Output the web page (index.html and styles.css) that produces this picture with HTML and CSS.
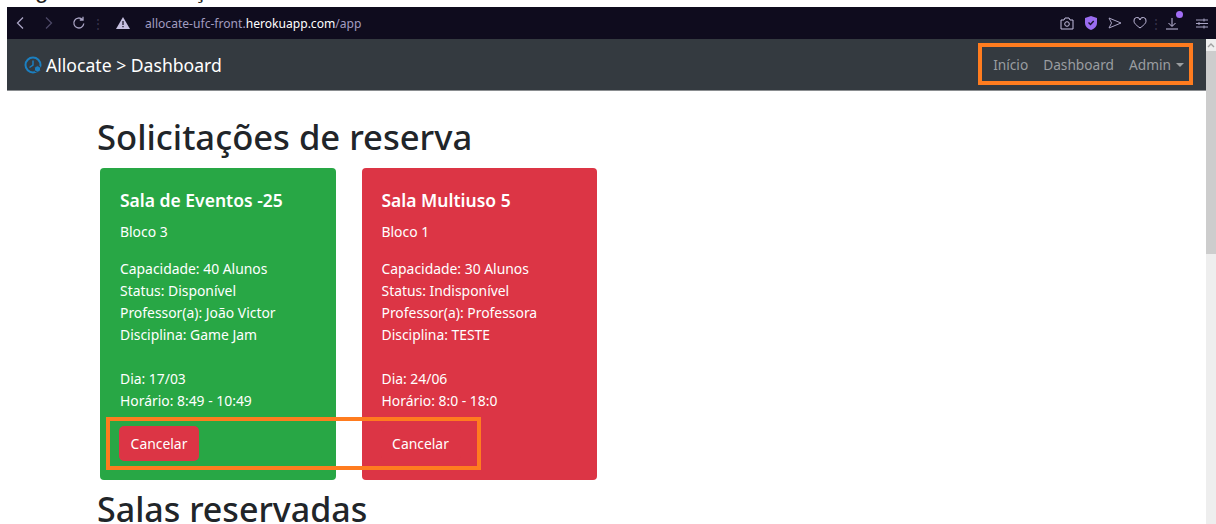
FILE: index.html
```html
<!DOCTYPE html>
<html lang="pt-BR">
<head>
<meta charset="utf-8">
<title>Allocate</title>
<link rel="stylesheet" href="styles.css">
</head>
<body>
<div class="caption"><span>Figura 4: Solicitações de reserva</span></div>
<div class="window">
  <div class="browser-bar">
    <div class="browser-left">
      <svg class="bi" width="10" height="14" viewBox="0 0 10 14"><path d="M8 1.500 2.500 7 8 12.500" fill="none" stroke="#a9a4c4" stroke-width="1.300"/></svg>
      <svg class="bi dim" width="10" height="14" viewBox="0 0 10 14"><path d="M2 1.500 7.500 7 2 12.500" fill="none" stroke="#4c4866" stroke-width="1.300"/></svg>
      <svg class="bi reload" width="14" height="14" viewBox="0 0 14 14"><path d="M11.800 7.500a5 5 0 1 1-1.400-4M11 .8v3.200H7.800" fill="none" stroke="#a9a4c4" stroke-width="1.300"/></svg>
      <span class="bsep">⋮</span>
      <svg class="warn" width="14" height="12" viewBox="0 0 14 12"><path d="M7 0 14 12H0Z" fill="#c5bfe0"/><path d="M6.400 4h1.200v4H6.400zM6.400 9h1.200v1.300H6.400z" fill="#0f0c1e"/></svg>
      <span class="url">allocate-ufc-front.<b>herokuapp.com</b>/app</span>
    </div>
    <div class="browser-right">
      <svg width="14" height="13" viewBox="0 0 14 13"><path d="M1 3h3l1-2h4l1 2h3v9H1Z" fill="none" stroke="#c5bfe0" stroke-width="1"/><circle cx="7" cy="7" r="2.300" fill="none" stroke="#c5bfe0"/></svg>
      <svg width="12" height="14" viewBox="0 0 12 14"><path d="M6 0 12 2v5c0 3.500-3 6-6 7-3-1-6-3.500-6-7V2Z" fill="#9a6cf0"/><path d="M3.500 6.500 5.500 8.500 8.700 5" fill="none" stroke="#17132a" stroke-width="1.400"/></svg>
      <svg width="14" height="12" viewBox="0 0 14 12"><path d="M1 1 13 6 1 11 3.500 6Z" fill="none" stroke="#a9a4c4"/></svg>
      <svg width="14" height="12" viewBox="0 0 14 12"><path d="M7 11C3 8 1 6.300 1 4a3 3 0 0 1 6-1 3 3 0 0 1 6 1c0 2.300-2 4-6 7Z" fill="none" stroke="#c5bfe0"/></svg>
      <span class="bsep">⋮</span>
      <span class="download">
        <svg width="14" height="13" viewBox="0 0 14 13"><path d="M7 1v8M3.500 6 7 9.500 10.500 6M1 12h12" fill="none" stroke="#c5bfe0"/></svg>
        <i class="dot"></i>
      </span>
      <svg class="tune" width="12" height="11" viewBox="0 0 12 11"><path d="M0 2h12M0 5.500h12M0 9h12M8 .5v3M3 4v3M8 7.500v3" fill="none" stroke="#a9a4c4"/></svg>
    </div>
  </div>
  <div class="viewport">
    <div class="page">
      <nav class="navbar">
        <div class="brand">
          <svg class="logo" width="18" height="18" viewBox="0 0 18 18"><circle cx="9" cy="9" r="7.500" fill="none" stroke="#1b7fc0" stroke-width="2"/><path d="M9 4.500V9L5.500 11.500" fill="none" stroke="#1b7fc0" stroke-width="1.500"/><circle cx="13.500" cy="13" r="3.200" fill="#1b7fc0" stroke="#343a40"/></svg>
          <span>Allocate &gt; Dashboard</span>
        </div>
        <ul class="nav">
          <li>Início</li>
          <li>Dashboard</li>
          <li class="dropdown">Admin</li>
        </ul>
      </nav>
      <main class="content">
        <h1>Solicitações de reserva</h1>
        <div class="cards">
          <section class="card green">
            <h5>Sala de Eventos -25</h5>
            <p class="block">Bloco 3</p>
            <p class="details">Capacidade: 40 Alunos<br>Status: Disponível<br>Professor(a): João Victor<br>Disciplina: Game Jam</p>
            <p class="details">Dia: 17/03<br>Horário: 8:49 - 10:49</p>
            <button class="btn">Cancelar</button>
          </section>
          <section class="card red">
            <h5>Sala Multiuso 5</h5>
            <p class="block">Bloco 1</p>
            <p class="details">Capacidade: 30 Alunos<br>Status: Indisponível<br>Professor(a): Professora<br>Disciplina: TESTE</p>
            <p class="details">Dia: 24/06<br>Horário: 8:0 - 18:0</p>
            <button class="btn">Cancelar</button>
          </section>
        </div>
        <h1 class="second">Salas reservadas</h1>
      </main>
    </div>
    <div class="scrollbar">
      <svg class="arrow" width="10" height="12" viewBox="0 0 10 12"><path d="M2 8 5 5 8 8" fill="none" stroke="#a0a0a0" stroke-width="1.400"/></svg>
      <div class="thumb"></div>
    </div>
  </div>
  <!-- highlight frames drawn over the page -->
  <div class="mark mark-nav"></div>
  <div class="mark mark-btn"></div>
</div>
</body>
</html>
```
FILE: styles.css
```css
* { box-sizing: border-box; }
html, body { margin: 0; height: 100%; overflow: hidden; background: #fff; }
body { font-family: "Noto Sans", "Open Sans", sans-serif; color: #212529; }

.caption { height: 7px; overflow: hidden; position: relative; }
.caption span {
  position: absolute; left: 15px; top: -23px;
  font: 24px/26px "Liberation Sans", sans-serif; color: #222;
  white-space: nowrap;
}

.window { position: relative; margin-left: 7px; height: 517px; display: flex; flex-direction: column; overflow: hidden; }

.browser-bar {
  height: 32px; flex: none; background: #0f0c1e;
  display: flex; align-items: center; justify-content: space-between;
  padding: 0 8px;
}
.browser-left, .browser-right { display: flex; align-items: center; }
.browser-left .dim { margin-left: 19px; }
.browser-left .reload { margin-left: 18px; }
.bsep { color: #3a3650; font-size: 12px; margin: 0 6px; }
.warn { margin-left: 6px; }
.url { margin-left: 15px; font-size: 12.100px; color: #a29cc0; }
.url b { font-weight: 400; color: #fff; }
.browser-right { gap: 11px; }
.browser-right .bsep { margin: 0 -8px; }
.download { position: relative; display: flex; margin-right: 6px; }
.dot { position: absolute; right: -4px; top: -6px; width: 7px; height: 7px; border-radius: 50%; background: #a26ef5; }

.viewport { flex: 1; display: flex; min-height: 0; }
.page { flex: 1; min-width: 0; }
.scrollbar { width: 10px; flex: none; background: #eee; }
.arrow { display: block; }
.thumb { height: 203px; background: #cdcdcd; }

.navbar {
  height: 52px; background: #343a40; border-bottom: 1px solid #8a8d90;
  display: flex; align-items: center; justify-content: space-between;
  padding: 0 22px 0 17px;
}
.brand { display: flex; align-items: center; gap: 4px; color: #fff; font-size: 17.600px; }
.nav { list-style: none; display: flex; gap: 15px; margin: 0; padding: 0; color: #9a9da0; font-size: 13.700px; }
.dropdown { display: flex; align-items: center; gap: 5px; }
.dropdown::after {
  content: ""; border-top: 4px solid #9a9da0;
  border-left: 4.500px solid transparent; border-right: 4.500px solid transparent;
}

.content { padding: 0 0 0 90px; }
h1 { font-weight: 500; font-size: 34.600px; line-height: 40px; margin: 26px 0 11px; }
.cards { display: flex; gap: 26px; padding-left: 3px; }
.card {
  width: 235.500px; height: 312px; border-radius: 4px; color: #fff;
  padding: 20px 20px 0;
  font-size: 13.900px; line-height: 22px;
}
.green { background: #28a745; }
.red { background: #dc3545; }
h5 { margin: 0 0 9px; font-size: 17.500px; line-height: 24px; font-weight: 600; }
.block { margin: 0 0 15px; }
.details { margin: 0 0 22px; }
.details + .details { margin-bottom: 14px; }
.btn {
  display: block; margin-left: -1px; width: 80px; height: 35px; border: 0; border-radius: 5px;
  background: #dc3545; color: #fff; font: inherit;
}
.second { margin: 9px 0 0; font-size: 34px; }

.mark { position: absolute; border: 4px solid #ff7c1f; }
.mark-nav { left: 971px; top: 36px; width: 215px; height: 42px; }
.mark-btn { left: 99px; top: 410px; width: 375px; height: 53px; }
```
